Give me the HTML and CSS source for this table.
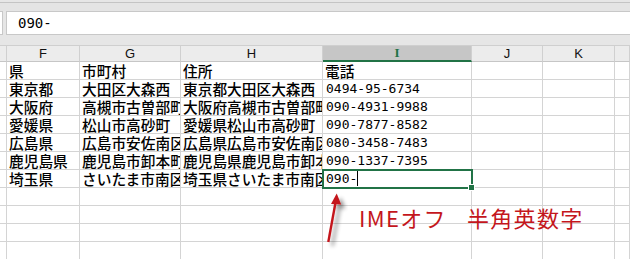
FILE: index.html
```html
<!DOCTYPE html>
<html lang="ja">
<head>
<meta charset="utf-8">
<link rel="stylesheet" href="styles.css">
</head>
<body>
<div class="app">
  <div class="toolbar-edge"></div>
  <div class="formula-row">
    <div class="namebox"></div>
    <div class="formula">090-</div>
  </div>
  <div class="gap"></div>
  <div class="sheet">
    <div class="ch corner"></div>
    <div class="ch">F</div>
    <div class="ch">G</div>
    <div class="ch">H</div>
    <div class="ch sel">I</div>
    <div class="ch">J</div>
    <div class="ch">K</div>
    <div class="ch"></div>

    <div class="rh"></div><div class="c">県</div><div class="c">市町村</div><div class="c">住所</div><div class="c">電話</div><div class="c"></div><div class="c"></div><div class="c"></div>
    <div class="rh"></div><div class="c">東京都</div><div class="c">大田区大森西</div><div class="c">東京都大田区大森西</div><div class="c num">0494-95-6734</div><div class="c"></div><div class="c"></div><div class="c"></div>
    <div class="rh"></div><div class="c">大阪府</div><div class="c">高槻市古曽部町</div><div class="c">大阪府高槻市古曽部町</div><div class="c num">090-4931-9988</div><div class="c"></div><div class="c"></div><div class="c"></div>
    <div class="rh"></div><div class="c">愛媛県</div><div class="c">松山市高砂町</div><div class="c">愛媛県松山市高砂町</div><div class="c num">090-7877-8582</div><div class="c"></div><div class="c"></div><div class="c"></div>
    <div class="rh"></div><div class="c">広島県</div><div class="c">広島市安佐南区</div><div class="c">広島県広島市安佐南区</div><div class="c num">080-3458-7483</div><div class="c"></div><div class="c"></div><div class="c"></div>
    <div class="rh"></div><div class="c">鹿児島県</div><div class="c">鹿児島市卸本町</div><div class="c">鹿児島県鹿児島市卸本町</div><div class="c num">090-1337-7395</div><div class="c"></div><div class="c"></div><div class="c"></div>
    <div class="rh"></div><div class="c">埼玉県</div><div class="c">さいたま市南区</div><div class="c">埼玉県さいたま市南区</div><div class="c num active">090-<span class="caret"></span></div><div class="c"></div><div class="c"></div><div class="c"></div>
    <div class="rh"></div><div class="c"></div><div class="c"></div><div class="c"></div><div class="c"></div><div class="c"></div><div class="c"></div><div class="c"></div>
    <div class="rh"></div><div class="c"></div><div class="c"></div><div class="c"></div><div class="c"></div><div class="c"></div><div class="c"></div><div class="c"></div>
    <div class="rh"></div><div class="c"></div><div class="c"></div><div class="c"></div><div class="c"></div><div class="c"></div><div class="c"></div><div class="c"></div>
    <div class="rh"></div><div class="c"></div><div class="c"></div><div class="c"></div><div class="c"></div><div class="c"></div><div class="c"></div><div class="c"></div>
  </div>

  <svg class="arrow" width="40" height="69" viewBox="0 0 40 69">
    <defs>
      <filter id="sh" x="-50%" y="-50%" width="200%" height="200%">
        <feGaussianBlur in="SourceAlpha" stdDeviation="2"/>
        <feOffset dx="4" dy="4" result="b"/>
        <feComponentTransfer><feFuncA type="linear" slope="0.45"/></feComponentTransfer>
        <feMerge><feMergeNode/><feMergeNode in="SourceGraphic"/></feMerge>
      </filter>
    </defs>
    <g filter="url(#sh)">
      <line x1="8.3" y1="52" x2="15.6" y2="12" stroke="#c4161c" stroke-width="2.4"/>
      <polygon points="16.7,3.5 11,14 21.2,14.6" fill="#c4161c"/>
    </g>
  </svg>
  <div class="note">IMEオフ 半角英数字</div>
</div>
</body>
</html>
```
FILE: styles.css
```css
html, body {
  margin: 0;
  padding: 0;
  background: #e6e6e6;
  overflow: hidden;
}
.app {
  position: relative;
  width: 630px;
  height: 259px;
  overflow: hidden;
  font-family: "Noto Sans CJK JP", sans-serif;
}
.toolbar-edge {
  height: 8px;
  margin-top: 2px;
  border-top: 1px solid #c4c4c4;
  background: #e4e4e4;
}
.formula-row {
  display: flex;
  gap: 3px;
  height: 24px;
}
.namebox {
  width: 3px;
  background: #fff;
  border: 1px solid #c8c8c8;
  border-left: none;
  box-sizing: border-box;
}
.formula {
  flex: 1;
  background: #fff;
  border: 1px solid #c8c8c8;
  border-right: none;
  box-sizing: border-box;
  padding-left: 11px;
  font-family: "DejaVu Sans Mono", monospace;
  font-size: 14px;
  line-height: 22px;
  color: #000;
}
.gap {
  height: 10px;
  background: #e6e6e6;
}
.sheet {
  display: grid;
  grid-template-columns: 7px 73px 101px 142px 149px 71px 72px 1fr;
  grid-template-rows: 17px repeat(11, 18px);
  background: #fff;
}
.ch {
  background: #ececec;
  border-top: 1px solid #cfcfcf;
  border-right: 1px solid #d0d0d0;
  border-bottom: 1px solid #c6c6c6;
  box-sizing: border-box;
  font-family: "Liberation Sans", sans-serif;
  font-size: 13px;
  line-height: 15px;
  text-align: center;
  color: #111;
}
.ch.sel {
  background: #c6c6c6;
  color: #217346;
  font-family: "Liberation Serif", serif;
  font-weight: bold;
  border-bottom: 2px solid #217346;
  line-height: 14px;
}
.rh {
  background: #fff;
  border-right: 1px solid #d4d4d4;
  border-bottom: 1px solid #d4d4d4;
  box-sizing: border-box;
}
.c {
  border-right: 1px solid #d4d4d4;
  border-bottom: 1px solid #d4d4d4;
  box-sizing: border-box;
  padding-left: 2px;
  font-size: 14.7px;
  font-weight: 500;
  line-height: 17px;
  white-space: nowrap;
  overflow: hidden;
  color: #000;
}
.c.num {
  font-family: "DejaVu Sans Mono", monospace;
  font-size: 13px;
  font-weight: normal;
  padding-left: 3px;
}
.c.active {
  position: relative;
  overflow: visible;
  outline: 2px solid #217346;
  outline-offset: -1px;
  z-index: 2;
}
.c.active::after {
  content: "";
  position: absolute;
  right: -4px;
  bottom: -4px;
  width: 5px;
  height: 5px;
  background: #217346;
  border: 1px solid #fff;
}
.caret {
  display: inline-block;
  width: 1px;
  height: 15px;
  background: #000;
  vertical-align: -3px;
}
.arrow {
  position: absolute;
  left: 320px;
  top: 190px;
}
.note {
  position: absolute;
  left: 359px;
  top: 206px;
  font-family: "Noto Sans CJK JP", sans-serif;
  font-size: 22px;
  line-height: 22px;
  letter-spacing: 1.3px;
  word-spacing: 14px;
  color: #c4161c;
  white-space: nowrap;
}
```
